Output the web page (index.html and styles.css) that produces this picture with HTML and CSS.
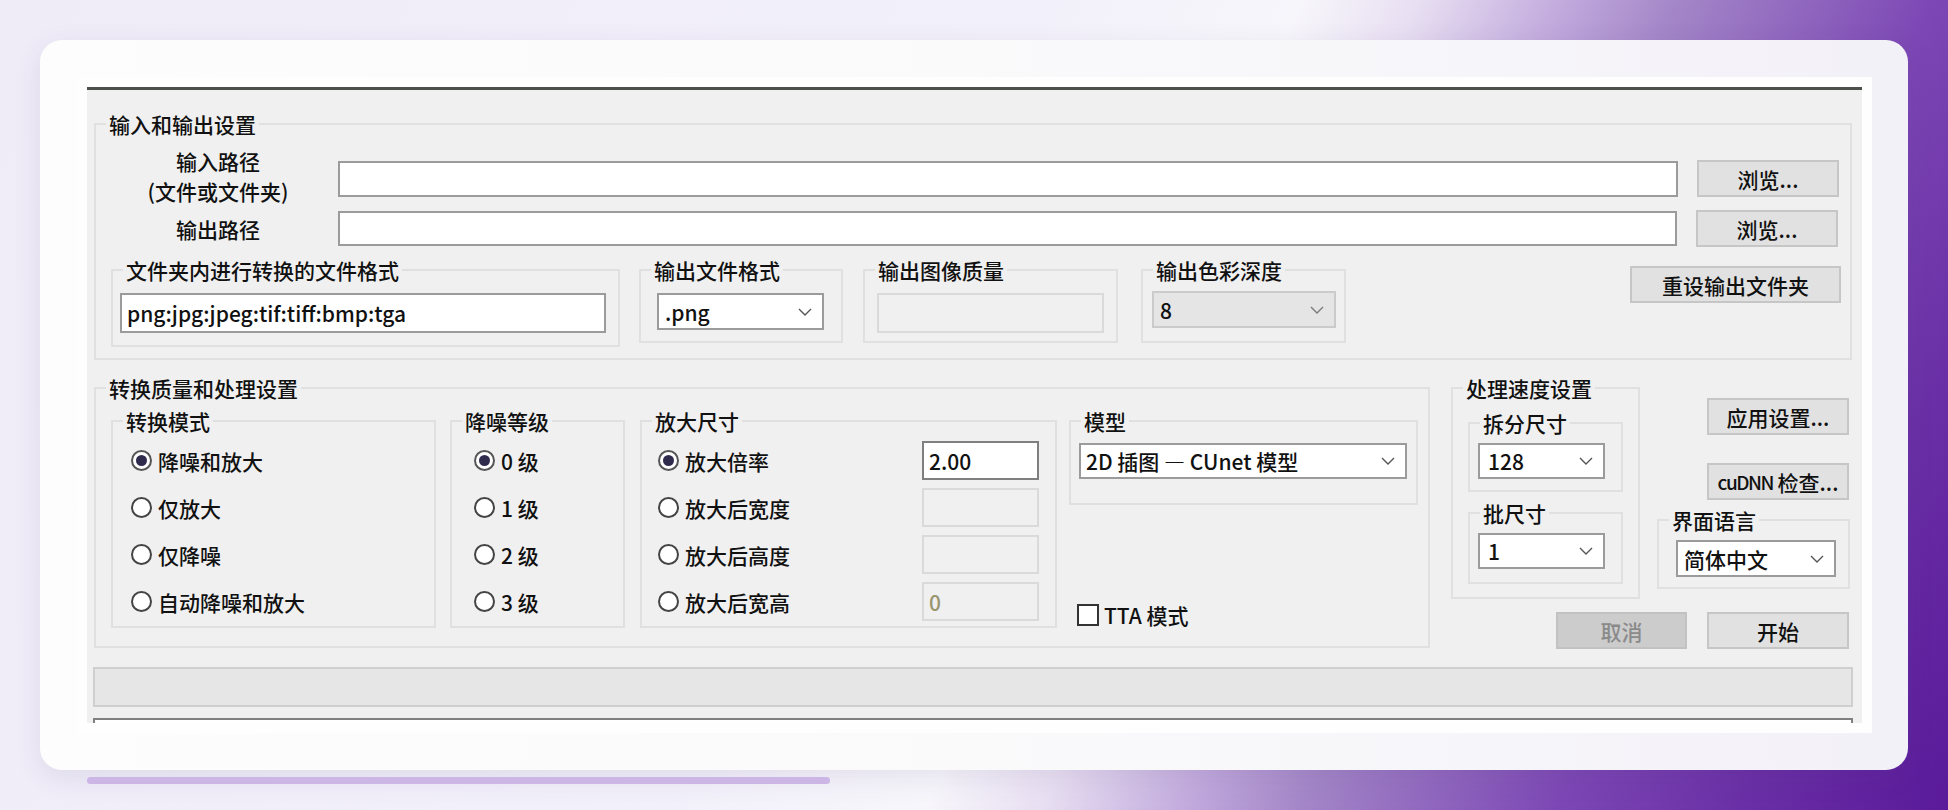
FILE: index.html
```html
<!DOCTYPE html>
<html lang="zh-CN">
<head>
<meta charset="utf-8">
<title>waifu2x-caffe</title>
<link rel="stylesheet" href="styles.css">
</head>
<body>
<div class="card">
  <div class="shot">
  <div class="app">
    <fieldset class="grp g1">
      <legend>输入和输出设置</legend>
      <div class="row r1">
        <div class="plabel two">输入路径<br>(文件或文件夹)</div>
        <div class="tb path"></div>
        <div class="btn browse">浏览...</div>
      </div>
      <div class="row r2">
        <div class="plabel">输出路径</div>
        <div class="tb path"></div>
        <div class="btn browse">浏览...</div>
      </div>
      <div class="r3">
        <fieldset class="grp f-fmt">
          <legend>文件夹内进行转换的文件格式</legend>
          <div class="tb">png:jpg:jpeg:tif:tiff:bmp:tga</div>
        </fieldset>
        <fieldset class="grp f-ext">
          <legend>输出文件格式</legend>
          <div class="combo"><span>.png</span><svg class="chev" viewBox="0 0 14 8"><polyline points="1,1 7,7 13,1"/></svg></div>
        </fieldset>
        <fieldset class="grp f-q">
          <legend>输出图像质量</legend>
          <div class="tb dis"></div>
        </fieldset>
        <fieldset class="grp f-depth">
          <legend>输出色彩深度</legend>
          <div class="combo dis"><span>8</span><svg class="chev" viewBox="0 0 14 8"><polyline points="1,1 7,7 13,1"/></svg></div>
        </fieldset>
        <div class="btn reset">重设输出文件夹</div>
      </div>
    </fieldset>

    <div class="lower">
      <fieldset class="grp g2">
        <legend>转换质量和处理设置</legend>
        <div class="subs">
          <fieldset class="grp f-mode">
            <legend>转换模式</legend>
            <div class="radios">
              <div class="ritem"><span class="rb on"></span><span class="rt">降噪和放大</span></div>
              <div class="ritem"><span class="rb"></span><span class="rt">仅放大</span></div>
              <div class="ritem"><span class="rb"></span><span class="rt">仅降噪</span></div>
              <div class="ritem"><span class="rb"></span><span class="rt">自动降噪和放大</span></div>
            </div>
          </fieldset>
          <fieldset class="grp f-noise">
            <legend>降噪等级</legend>
            <div class="radios">
              <div class="ritem"><span class="rb on"></span><span class="rt">0 级</span></div>
              <div class="ritem"><span class="rb"></span><span class="rt">1 级</span></div>
              <div class="ritem"><span class="rb"></span><span class="rt">2 级</span></div>
              <div class="ritem"><span class="rb"></span><span class="rt">3 级</span></div>
            </div>
          </fieldset>
          <fieldset class="grp f-scale">
            <legend>放大尺寸</legend>
            <div class="radios">
              <div class="ritem"><span class="rb on"></span><span class="rt">放大倍率</span><div class="tb on">2.00</div></div>
              <div class="ritem"><span class="rb"></span><span class="rt">放大后宽度</span><div class="tb dis"></div></div>
              <div class="ritem"><span class="rb"></span><span class="rt">放大后高度</span><div class="tb dis"></div></div>
              <div class="ritem"><span class="rb"></span><span class="rt">放大后宽高</span><div class="tb dis zero">0</div></div>
            </div>
          </fieldset>
          <div class="mcol">
            <fieldset class="grp f-model">
              <legend>模型</legend>
              <div class="combo"><span>2D 插图 — CUnet 模型</span><svg class="chev" viewBox="0 0 14 8"><polyline points="1,1 7,7 13,1"/></svg></div>
            </fieldset>
            <div class="tta"><span class="cb"></span><span>TTA 模式</span></div>
          </div>
        </div>
      </fieldset>

      <div class="side">
        <div class="side-top">
          <fieldset class="grp g3">
            <legend>处理速度设置</legend>
            <fieldset class="grp f-split">
              <legend>拆分尺寸</legend>
              <div class="combo"><span>128</span><svg class="chev" viewBox="0 0 14 8"><polyline points="1,1 7,7 13,1"/></svg></div>
            </fieldset>
            <fieldset class="grp f-batch">
              <legend>批尺寸</legend>
              <div class="combo"><span>1</span><svg class="chev" viewBox="0 0 14 8"><polyline points="1,1 7,7 13,1"/></svg></div>
            </fieldset>
          </fieldset>
          <div class="rcol">
            <div class="btn apply">应用设置...</div>
            <div class="btn cudnn"><span class="cu">cuDNN</span>&nbsp;检查...</div>
            <fieldset class="grp f-lang">
              <legend>界面语言</legend>
              <div class="combo"><span>简体中文</span><svg class="chev" viewBox="0 0 14 8"><polyline points="1,1 7,7 13,1"/></svg></div>
            </fieldset>
          </div>
        </div>
        <div class="side-bot">
          <div class="btn cancel">取消</div>
          <div class="btn start">开始</div>
        </div>
      </div>
    </div>

    <div class="progress"></div>
    <div class="log"></div>
  </div>
  </div>
</div>
<div class="scroll"></div>
</body>
</html>
```

FILE: styles.css
```css
* { box-sizing: border-box; }

body {
  margin: 0;
  width: 1948px;
  height: 810px;
  overflow: hidden;
  font-family: "Noto Sans CJK SC", "Noto Sans", sans-serif;
  font-size: 21px;
  font-weight: 500;
  color: #111;
  background: linear-gradient(115deg,
    #efecf8 0%, #f2f0fa 45%, #f7f6fb 56%, #e8dff2 61%,
    #c0a8dc 67.5%, #a487c8 72%, #7d48b5 83%, #6a2fa6 91%, #5a1a9a 100%);
}

.card {
  margin: 40px 0 0 40px;
  width: 1868px;
  height: 730px;
  padding: 37px 0 0 37px;
  border-radius: 22px;
  background: linear-gradient(90deg, #fdfdfd 0%, #fafafb 50%, #f3f1f8 100%);
  box-shadow: 0 8px 28px rgba(70, 50, 110, 0.10);
}

.shot {
  width: 1795px;
  height: 656px;
  padding: 10px;
  background: #fefefe;
}

.app {
  width: 1775px;
  height: 636px;
  background: #f0f0f0;
  border-top: 3px solid #4b504b;
  overflow: hidden;
}

.scroll {
  margin: 7px 0 0 87px;
  width: 743px;
  height: 7px;
  border-radius: 4px;
  background: #cbb6e6;
}

/* group boxes */
.grp {
  margin: 0;
  padding: 0;
  border: 2px solid #e0e0e0;
  min-width: 0;
}
.grp > legend {
  margin-left: 10px;
  padding: 0 3px;
  height: 26px;
  line-height: 26px;
  white-space: nowrap;
}

/* controls */
.tb {
  height: 36px;
  background: #fff;
  border: 2px solid #9b9b9b;
  padding-left: 5px;
  display: flex;
  align-items: center;
  white-space: nowrap;
}
.tb.dis {
  background: #f0f0f0;
  border-color: #dadada;
}
.tb.zero { color: #9a9670; }

.combo {
  display: flex;
  align-items: center;
  justify-content: space-between;
  background: #fff;
  border: 2px solid #9b9b9b;
  padding: 0 10px 0 6px;
  white-space: nowrap;
}
.combo.dis {
  background: #e5e5e5;
  border-color: #cbcbcb;
}
.chev {
  width: 14px;
  height: 8px;
  flex: none;
}
.chev polyline {
  fill: none;
  stroke: #555;
  stroke-width: 1.4;
}
.combo.dis .chev polyline { stroke: #7a7a7a; }

.btn {
  display: flex;
  align-items: center;
  justify-content: center;
  background: #e1e1e1;
  border: 2px solid #c6c6c6;
  height: 37px;
  white-space: nowrap;
}

/* top group */
.g1 {
  margin: 21px 0 0 7px;
  width: 1758px;
  height: 249px;
}
.row {
  display: flex;
  align-items: center;
  height: 37px;
}
.r1 { margin: 23px 0 0 16px; }
.r2 { margin: 13px 0 0 16px; }
.plabel {
  width: 212px;
  text-align: center;
  line-height: 24px;
  flex: none;
}
.plabel.two {
  line-height: 30px;
  margin-bottom: 6px;
}
.path {
  width: 1340px;
  margin-left: 14px;
}
.r2 .path {
  width: 1339px;
  height: 35px;
}
.browse {
  width: 142px;
  margin-left: 19px;
}

.r3 {
  display: flex;
  align-items: flex-start;
  margin: 10px 0 0 15px;
}
.f-fmt { width: 509px; height: 90px; }
.f-fmt .tb {
  margin: 10px 0 0 7px;
  width: 486px;
  height: 40px;
}
.f-ext { margin-left: 19px; width: 204px; height: 86px; }
.f-ext .combo {
  margin: 10px 0 0 16px;
  width: 167px;
  height: 37px;
}
.f-q { margin-left: 20px; width: 255px; height: 86px; }
.f-q .tb {
  margin: 10px 0 0 12px;
  width: 227px;
  height: 40px;
}
.f-depth { margin-left: 23px; width: 205px; height: 86px; }
.f-depth .combo {
  margin: 8px 0 0 9px;
  width: 184px;
  height: 37px;
}
.reset {
  margin: 9px 0 0 284px;
  width: 211px;
}

/* lower area */
.lower {
  display: flex;
  align-items: flex-start;
  margin-top: 15px;
}
.g2 {
  margin-left: 7px;
  width: 1336px;
  height: 273px;
}
.subs {
  display: flex;
  align-items: flex-start;
  margin: 7px 0 0 15px;
}
.f-mode { width: 325px; height: 220px; }
.f-noise { margin-left: 14px; width: 175px; height: 220px; }
.f-scale { margin-left: 15px; width: 417px; height: 220px; }

.radios { margin-top: 3px; }
.ritem {
  display: flex;
  align-items: center;
  height: 47px;
  white-space: nowrap;
}
.f-mode .ritem { padding-left: 18px; }
.f-noise .ritem { padding-left: 22px; }
.f-scale .ritem { padding-left: 16px; }
.rb {
  width: 21px;
  height: 21px;
  flex: none;
  border: 2px solid #444;
  border-radius: 50%;
  background: #fff;
  display: flex;
  align-items: center;
  justify-content: center;
}
.rb.on { border-color: #555; }
.rb.on::after {
  content: "";
  width: 11px;
  height: 11px;
  border-radius: 50%;
  background: #2f2b4d;
}
.rt { margin-left: 6px; }
.f-scale .tb {
  margin-left: auto;
  margin-right: 16px;
  width: 117px;
  height: 39px;
}
.f-scale .tb.on { border-color: #7f7f7f; }

.mcol { margin-left: 12px; width: 349px; }
.f-model { width: 349px; height: 97px; }
.f-model .combo {
  margin: 9px 0 0 8px;
  width: 328px;
  height: 36px;
  padding-left: 5px;
}
.tta {
  display: flex;
  align-items: center;
  height: 24px;
  margin: 98px 0 0 8px;
  white-space: nowrap;
}
.cb {
  width: 22px;
  height: 22px;
  border: 2px solid #333;
  background: #fff;
  margin-right: 5px;
}

/* right side */
.side { margin-left: 21px; width: 399px; }
.side-top {
  display: flex;
  align-items: flex-start;
}
.g3 { width: 189px; height: 224px; }
.f-split {
  margin: 9px 0 0 15px;
  width: 155px;
  height: 82px;
}
.f-batch {
  margin: 8px 0 0 15px;
  width: 155px;
  height: 84px;
}
.f-split .combo,
.f-batch .combo {
  margin: 7px 0 0 8px;
  width: 127px;
  height: 36px;
  padding-left: 8px;
}
.rcol { margin-left: 17px; width: 193px; }
.apply {
  margin: 23px 0 0 50px;
  width: 142px;
}
.cudnn {
  margin: 28px 0 0 50px;
  width: 142px;
}
.cu { letter-spacing: -1.5px; font-size: 19px; }
.f-lang {
  margin-top: 7px;
  width: 193px;
  height: 82px;
}
.f-lang .combo {
  margin: 7px 0 0 17px;
  width: 160px;
  height: 37px;
}
.side-bot {
  display: flex;
  margin-top: 13px;
}
.cancel {
  margin-left: 105px;
  width: 131px;
  background: #cccccc;
  border-color: #c2c2c2;
  color: #8a8a8a;
}
.start {
  margin-left: 20px;
  width: 142px;
}

/* bottom bars */
.progress {
  margin: 18px 0 0 6px;
  width: 1760px;
  height: 40px;
  background: #e6e6e6;
  border: 2px solid #cfcfcf;
}
.log {
  margin: 11px 0 0 6px;
  width: 1760px;
  height: 20px;
  background: #fff;
  border: 2px solid #808080;
}
```
